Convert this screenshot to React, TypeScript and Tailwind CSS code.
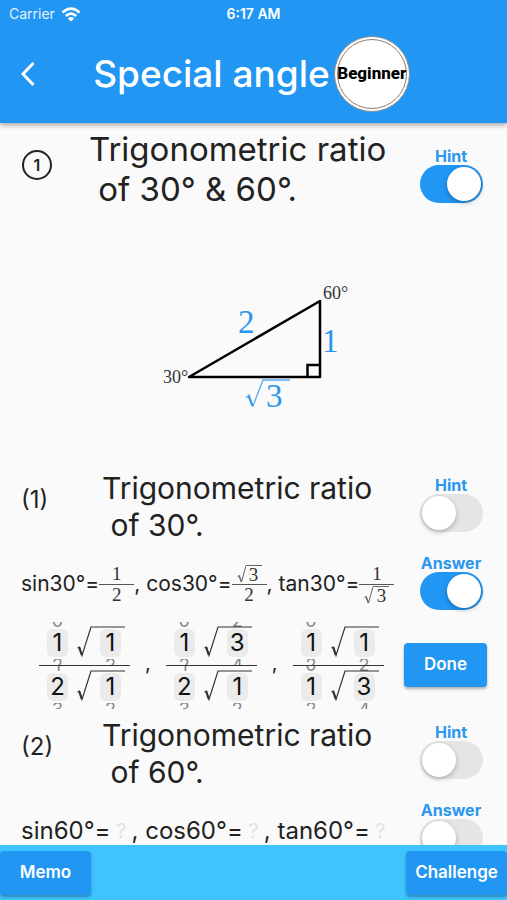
import { useState } from 'react';
import type { ReactNode } from 'react';

function Toggle({ label, name, initial = false }: { label: string; name: string; initial?: boolean }) {
  const [on, setOn] = useState(initial);
  return (
    <label className="flex w-28 shrink-0 flex-col items-center text-base leading-[18px] font-bold text-[#2b96ee]">
      <span>{label}</span>
      <input
        type="checkbox"
        role="switch"
        name={name}
        checked={on}
        onChange={(e) => setOn(e.target.checked)}
        className="h-[38px] w-[63px] cursor-pointer appearance-none rounded-full bg-[#e5e5e5] p-[2px] before:block before:size-[34px] before:rounded-full before:bg-white before:shadow-[0_2px_5px_rgba(0,0,0,0.25)] before:transition-transform checked:bg-[#2196f3] checked:before:translate-x-[25px]"
      />
    </label>
  );
}

function Button({ children, className = '' }: { children: ReactNode; className?: string }) {
  return (
    <button
      type="button"
      className={`h-11 shrink-0 rounded bg-[#2196f3] text-[17px] font-semibold text-white shadow-[0_2px_3px_rgba(0,0,0,0.3)] ${className}`}
    >
      {children}
    </button>
  );
}

function SmallRoot({ value }: { value: string }) {
  return (
    <span className="flex items-end">
      <svg viewBox="0 0 9 18" className="h-[18px] w-[9px]" fill="none" stroke="#666" strokeWidth="1">
        <path d="M0.5 11.5 2 10.5 4.5 17 9 0.5" />
        <path d="M2 10.5 4.5 17" strokeWidth="1.4" />
      </svg>
      <span className="w-4 border-t border-[#666] text-center leading-[17px]">{value}</span>
    </span>
  );
}

function Fraction({ top, bottom }: { top: ReactNode; bottom: ReactNode }) {
  return (
    <span className="flex w-[35px] flex-col items-center font-['Liberation_Serif',serif] text-[19px] text-[#333]">
      <span className="flex h-[20px] items-center leading-[18px]">{top}</span>
      <span className="h-px w-full bg-[#555]" />
      <span className="flex h-[20px] items-center leading-[18px]">{bottom}</span>
    </span>
  );
}

function Wheel({ value, min, label }: { value: number; min: number; label: string }) {
  const [current, setCurrent] = useState(value);
  return (
    <span className="flex h-[43px] w-[21px] flex-col items-center justify-between text-lg text-[#888]">
      <span aria-hidden="true" className="flex h-[6px] items-end overflow-hidden">
        <span className="-mb-[2px] leading-[18px]">{current > min ? current - 1 : ''}</span>
      </span>
      <select
        aria-label={label}
        value={current}
        onChange={(e) => setCurrent(Number(e.target.value))}
        className="h-7 w-[21px] cursor-pointer appearance-none rounded-md bg-[#ebebeb] p-0 text-center text-2xl leading-7 text-[#111] [text-align-last:center]"
      >
        {[0, 1, 2, 3, 4, 5, 6, 7, 8, 9]
          .filter((n) => n >= min)
          .map((n) => (
            <option key={n}>{n}</option>
          ))}
      </select>
      <span aria-hidden="true" className="flex h-[6px] items-start overflow-hidden">
        <span className="-mt-[2px] leading-[18px]">{current + 1}</span>
      </span>
    </span>
  );
}

function RootTerm({ coefficient, radicand, label }: { coefficient: number; radicand: number; label: string }) {
  return (
    <div className="relative flex justify-between pr-[9px] pl-2">
      <Wheel value={coefficient} min={0} label={`${label} coefficient`} />
      <Wheel value={radicand} min={1} label={`${label} radicand`} />
      <svg
        viewBox="0 0 48 32"
        className="pointer-events-none absolute top-1 left-[38px] h-8 w-12"
        fill="none"
        stroke="#333"
        strokeWidth="1.2"
      >
        <path d="M0.5 22 2.5 21 5 29.5 14 1H48" />
        <path d="M2.2 21.5 4.8 29" strokeWidth="2.2" />
      </svg>
    </div>
  );
}

type Ratio = { name: string; top: [number, number]; bottom: [number, number] };

function RatioPicker({ ratio }: { ratio: Ratio }) {
  return (
    <div className="flex w-[91px] flex-col">
      <RootTerm coefficient={ratio.top[0]} radicand={ratio.top[1]} label={`${ratio.name} numerator`} />
      <div className="h-px bg-[#333]" />
      <RootTerm coefficient={ratio.bottom[0]} radicand={ratio.bottom[1]} label={`${ratio.name} denominator`} />
    </div>
  );
}

function Question({ number, lines, id }: { number: string; lines: [string, string]; id: string }) {
  return (
    <div className="flex h-[77px] items-start">
      <span className="w-[102px] shrink-0 pt-3 pl-[21px] text-2xl leading-9">{number}</span>
      <h2 className="flex-1 text-[30px] leading-[37px] whitespace-pre">
        {lines[0]}
        <br />
        {lines[1]}
      </h2>
      <div className="pt-[6px]">
        <Toggle label="Hint" name={`${id}-hint`} />
      </div>
    </div>
  );
}

function Unknown() {
  return <span className="w-[21px] text-center text-xl text-[#e2e2e2]">?</span>;
}

function Triangle() {
  return (
    <svg
      viewBox="0 0 200 140"
      className="mx-auto h-[140px] w-[200px]"
      role="img"
      aria-label="Right triangle with angles 30° and 60°"
      fontFamily="'Liberation Serif', serif"
    >
      <path d="M35 97 166 21V97Z" fill="none" stroke="#000" strokeWidth="2.5" strokeLinejoin="round" />
      <path d="M153.500 97V85H166" fill="none" stroke="#000" strokeWidth="2.5" />
      <g fill="#333" fontSize="18">
        <text x="9" y="103">30°</text>
        <text x="169" y="19">60°</text>
      </g>
      <g fill="#2b96ee" fontSize="33">
        <text x="84" y="53">2</text>
        <text x="168" y="72">1</text>
        <text x="112" y="127">3</text>
      </g>
      <path d="M92 118 95 115 99 126 109 100H136" fill="none" stroke="#5aadf2" strokeWidth="1.3" />
      <path d="M94.500 116 98.500 126" fill="none" stroke="#2b96ee" strokeWidth="2" />
    </svg>
  );
}

const ratios: Ratio[] = [
  { name: 'sin30°', top: [1, 1], bottom: [2, 1] },
  { name: 'cos30°', top: [1, 3], bottom: [2, 1] },
  { name: 'tan30°', top: [1, 1], bottom: [1, 3] },
];

export default function App() {
  return (
    <div className="flex h-screen flex-col bg-[#fafafa] font-['Inter','Noto_Sans',sans-serif] text-[#222]">
      <header className="relative z-10 bg-[#2196f3] pb-[3px] text-white shadow-[0_2px_5px_rgba(0,0,0,0.35)]">
        <div className="grid h-7 grid-cols-3 items-center px-[9px] text-sm">
          <span className="flex items-center gap-[6px] text-[#e4f2fe]">
            Carrier
            <svg viewBox="0 0 20 15" className="h-[15px] w-5" fill="none" stroke="#fff" strokeWidth="2.6">
              <path d="M1.500 5.500Q10 -2.300 18.500 5.500" />
              <path d="M4.800 9Q10 4.400 15.200 9" />
              <path d="M10 14.500 6.900 11.400Q10 8.800 13.100 11.400Z" fill="#fff" stroke="none" />
            </svg>
          </span>
          <span className="text-center font-semibold">6:17 AM</span>
        </div>
        <div className="flex h-[92px] items-center">
          <button type="button" aria-label="Back" className="flex h-12 w-14 items-center justify-center">
            <svg viewBox="0 0 16 26" className="h-[26px] w-4" fill="none" stroke="#fff" strokeWidth="3">
              <path d="M13.500 2 3 13 13.500 24" />
            </svg>
          </button>
          <div className="flex flex-1 items-center justify-center gap-1 pr-[60px]">
            <h1 className="text-[37px] leading-[44px] font-medium whitespace-nowrap">Special angle</h1>
            <span className="flex size-[76px] shrink-0 rounded-full border border-[#8e8e8e] bg-white p-[2px]">
              <span className="flex min-w-0 flex-1 items-center justify-center rounded-full border border-[#8a7d74] font-['Roboto',sans-serif] text-[17px] font-extrabold text-black">
                Beginner
              </span>
            </span>
          </div>
        </div>
      </header>

      <main className="flex-1 overflow-y-auto [scrollbar-width:none]">
        <section className="pt-[6px]">
          <div className="flex items-start">
            <span className="w-[89px] shrink-0 pt-[21px] pl-[22px]">
              <span className="flex size-[30px] items-center justify-center rounded-full border-2 border-[#222] text-base font-semibold">
                1
              </span>
            </span>
            <h2 className="flex-1 text-[33px] leading-10 whitespace-pre">
              {'Trigonometric ratio'}
              <br />
              {' of 30° & 60°.'}
            </h2>
            <div className="pt-[18px]">
              <Toggle label="Hint" name="q1-hint" initial />
            </div>
          </div>
          <div className="pt-[71px] pb-[50px]">
            <Triangle />
          </div>
        </section>

        <section className="h-[247px]">
          <Question number="(1)" lines={['Trigonometric ratio', ' of 30°.']} id="q1-1" />
          <div className="flex h-[70px] items-center">
            <div className="flex flex-1 items-center pt-1 pl-[21px] text-[21px] whitespace-pre">
              sin30°=
              <Fraction top="1" bottom="2" />
              {', cos30°='}
              <Fraction top={<SmallRoot value="3" />} bottom="2" />
              {', tan30°='}
              <Fraction top="1" bottom={<SmallRoot value="3" />} />
            </div>
            <Toggle label="Answer" name="q1-1-answer" initial />
          </div>
          <form className="flex h-24 items-center justify-between pr-5 pl-[39px]" onSubmit={(e) => e.preventDefault()}>
            <div className="flex items-center gap-[15px]">
              <RatioPicker ratio={ratios[0]} />
              <span className="pb-1 text-xl">,</span>
              <RatioPicker ratio={ratios[1]} />
              <span className="pb-1 text-xl">,</span>
              <RatioPicker ratio={ratios[2]} />
            </div>
            <Button className="w-[83px]">Done</Button>
          </form>
        </section>

        <section>
          <Question number="(2)" lines={['Trigonometric ratio', ' of 60°.']} id="q1-2" />
          <div className="flex h-[70px] items-center">
            <div className="flex flex-1 items-center pt-1 pl-[21px] text-2xl whitespace-pre">
              sin60°=
              <Unknown />
              {', cos60°='}
              <Unknown />
              {', tan60°='}
              <Unknown />
            </div>
            <Toggle label="Answer" name="q1-2-answer" />
          </div>
        </section>
      </main>

      <footer className="flex h-[55px] items-center justify-between bg-[#40c4ff]">
        <Button className="w-[91px]">Memo</Button>
        <Button className="w-[101px]">Challenge</Button>
      </footer>
    </div>
  );
}
